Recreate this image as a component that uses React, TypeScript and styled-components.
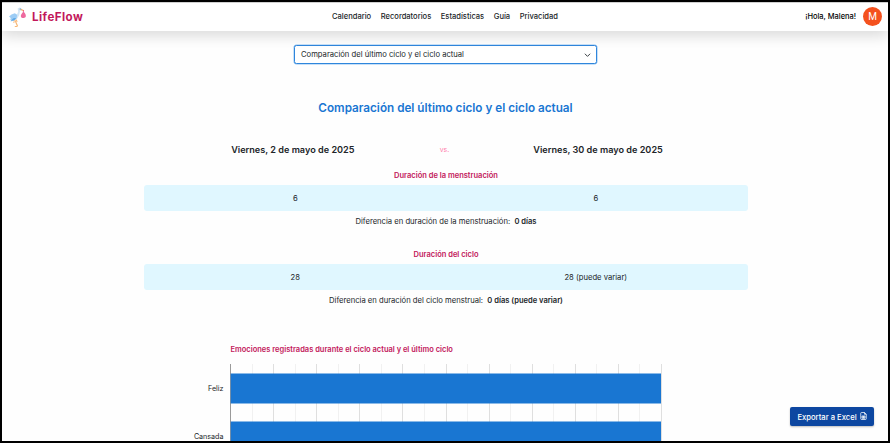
import React from 'react';
import styled, { createGlobalStyle } from 'styled-components';

const Global = createGlobalStyle`
  *, *::before, *::after { box-sizing: border-box; }
  body { margin: 0; background: #fff; }
`;

const Frame = styled.div`
  position: relative;
  width: 890px;
  height: 443px;
  overflow: hidden;
  border: 2px solid #000;
  background: #fefefe;
  color: #212529;
  font-family: Inter, 'Liberation Sans', sans-serif;
  font-size: 7.65px;
  line-height: 16px;
  white-space: nowrap;
`;

const Header = styled.header`
  position: relative;
  display: grid;
  grid-template-columns: 1fr auto 1fr;
  align-items: center;
  height: 29px;
  padding: 0 6px;
  background: #fff;
  border-top: 1px solid #d0d0d0;
  box-shadow: 0 5px 14px rgba(0, 0, 0, 0.14);
`;

const Brand = styled.a`
  display: flex;
  align-items: center;
  gap: 5px;
  color: #c2185b;
  font-size: 11.6px;
  font-weight: 700;
  letter-spacing: 0.45px;
`;

const Nav = styled.nav`
  display: flex;
  gap: 9.6px;
  font-size: 7.55px;
  font-weight: 500;
`;

const Account = styled.div`
  display: flex;
  align-items: center;
  justify-content: flex-end;
  gap: 7px;
  font-size: 7.46px;
  font-weight: 500;
  color: #000;
`;

const Avatar = styled.span`
  display: grid;
  place-items: center;
  width: 19px;
  height: 19px;
  margin-top: -2px;
  border-radius: 50%;
  background: #f4511e;
  color: #fff;
  font: 400 10px Roboto, sans-serif;
`;

const Main = styled.main`
  display: flex;
  flex-direction: column;
  width: 604px;
  margin: 14px 0 0 142px;
`;

const Select = styled.div`
  display: flex;
  align-items: center;
  justify-content: space-between;
  align-self: flex-start;
  width: 303px;
  height: 19px;
  margin-left: 150px;
  padding: 1px 5px 0 6px;
  border: 1px solid #2f86dc;
  border-radius: 2.5px;
  background: #fff;
  box-shadow: 0 0 0 0.5px #90c2f2;
`;

const Title = styled.h1`
  margin: 35px 1px 0 0;
  color: #1976d2;
  font-size: 11.71px;
  font-weight: 600;
  line-height: 18px;
  text-align: center;
`;

const Dates = styled.div`
  display: flex;
  align-items: center;
  justify-content: space-evenly;
  margin-top: 25px;
  padding-left: 2px;
  font-size: 9.13px;
  font-weight: 600;
`;

const Versus = styled.span`
  margin-right: -1px;
  color: #ff80ab;
  font-size: 6.9px;
  font-weight: 400;
`;

const Comparison = styled.section`
  margin-top: 9px;
  & + & { margin-top: 16px; }
`;

const Heading = styled.h2`
  margin: 0;
  color: #c2185b;
  font-size: 7.52px;
  font-weight: 600;
  line-height: 18px;
  text-align: center;
`;

const Values = styled.div`
  display: grid;
  grid-template-columns: 1fr 1fr;
  align-items: center;
  height: 26px;
  padding: 2px 2px 0 1px;
  border-radius: 3px;
  background: #e0f7ff;
  text-align: center;
`;

const Difference = styled.p`
  display: flex;
  justify-content: center;
  gap: 4.3px;
  margin: 3px 0 0;
`;

const Strong = styled.strong`
  font-size: 7.55px;
  font-weight: 600;
`;

const Chart = styled.section`
  display: grid;
  grid-template-columns: 79.5px 431px;
  column-gap: 7px;
  margin-top: 33px;
`;

const ChartTitle = styled.h2`
  grid-column: 2;
  margin: 0;
  color: #c2185b;
  font-size: 7.5px;
  font-weight: 600;
  line-height: 16px;
`;

const Categories = styled.div`
  display: grid;
  grid-auto-rows: 48px;
  align-items: center;
  padding-top: 7px;
  font-size: 7.15px;
  text-align: right;
`;

const Plot = styled.svg`
  display: block;
  margin: 6px 0 0 -0.5px;
`;

const ExportButton = styled.button`
  position: absolute;
  right: 14px;
  bottom: 15px;
  display: flex;
  align-items: center;
  justify-content: center;
  gap: 3px;
  width: 84px;
  height: 19px;
  padding: 1px 0 0;
  border: 0;
  border-radius: 2px;
  background: #0d47a1;
  color: #fff;
  font: 500 7.65px Inter, 'Liberation Sans', sans-serif;
  box-shadow: 0 1px 2px rgba(0, 0, 0, 0.25);

  svg { margin-top: -2px; }
`;

const Stork = () => (
  <svg width="19" height="21" viewBox="0 0 19 21" fill="none">
    <path d="M9.600 1.400 11.500.5l2 .8.300 1.300-1.800 1.600-.8 4-2.700 4.600-4 .6-1.500-2L8.500 9l1.700-4.400z" fill="#d3e6f5" />
    <path d="M1 9.500 3.500 7.500l3.300-1.300 2.400 1.600-.5 3.200-2.400 2.400-3.800 1 1-1.600-2-.2 1.500-1.400z" fill="#9dcdf5" />
    <path d="M2.500 13.800 5.800 11l2.500.2-2.200 2.200z" fill="#5fa9e6" />
    <path d="m13 1.900 3.200 1.300-.4.800-2.900-.7z" fill="#f4a24e" />
    <circle cx="12.200" cy="1.900" r=".5" fill="#37566f" />
    <path d="M15.400 3.200v2.600" stroke="#e94d87" strokeWidth=".8" />
    <path d="M15.400 4.800c1.900 1.400 2.700 3 2.400 4.700-.5 1.900-4.400 2-4.900.2-.4-1.700.8-3.400 2.500-4.900z" fill="#ee6a9f" />
    <path d="M6.600 13.300 8 15.500l1.600 3.800M8 12.800l1.200 2M6.400 15.400l-1-.5M6.800 19.500l2.600-.2" stroke="#f7b878" strokeWidth="1.200" />
  </svg>
);

const Chevron = () => (
  <svg width="7" height="7" viewBox="0 0 8 8" fill="none" stroke="#343a40" strokeWidth="1.100">
    <path d="m1 2 3 3 3-3" />
  </svg>
);

const FileIcon = () => (
  <svg width="7" height="8" viewBox="0 0 14 16" fill="none" stroke="#fff" strokeWidth="1.500">
    <path d="M9 1H3a1.500 1.500 0 0 0-1.500 1.500v11A1.500 1.500 0 0 0 3 15h8a1.500 1.500 0 0 0 1.500-1.500v-9zM9 1v3.500h3.500M4 8h6v4.500H4zM4 10.200h6M7 8v4.500" />
  </svg>
);

const links = ['Calendario', 'Recordatorios', 'Estadísticas', 'Guía', 'Privacidad'];
const comparisons = [
  { heading: 'Duración de la menstruación', values: ['6', '6'], label: 'Diferencia en duración de la menstruación:', result: '0 días' },
  { heading: 'Duración del ciclo', values: ['28', '28 (puede variar)'], label: 'Diferencia en duración del ciclo menstrual:', result: '0 días (puede variar)' },
];
const ticks = Array.from({ length: 21 }, (_, i) => i);
const tickColor = (i: number) => (i === 0 ? '#9a9a9a' : i % 2 ? '#f1f1f1' : '#dfdfdf');

export default function App() {
  return (
    <>
      <Global />
      <Frame>
        <Header>
          <Brand><Stork />LifeFlow</Brand>
          <Nav>{links.map((l) => <span key={l}>{l}</span>)}</Nav>
          <Account>¡Hola, Malena!<Avatar>M</Avatar></Account>
        </Header>
        <Main>
          <Select>Comparación del último ciclo y el ciclo actual<Chevron /></Select>
          <Title>Comparación del último ciclo y el ciclo actual</Title>
          <Dates>
            <span>Viernes, 2 de mayo de 2025</span>
            <Versus>vs.</Versus>
            <span>Viernes, 30 de mayo de 2025</span>
          </Dates>
          {comparisons.map((c) => (
            <Comparison key={c.heading}>
              <Heading>{c.heading}</Heading>
              <Values>{c.values.map((v, i) => <span key={i}>{v}</span>)}</Values>
              <Difference>{c.label}<Strong>{c.result}</Strong></Difference>
            </Comparison>
          ))}
          <Chart>
            <ChartTitle>Emociones registradas durante el ciclo actual y el último ciclo</ChartTitle>
            <Categories><span>Feliz</span><span>Cansada</span></Categories>
            <Plot width="432" height="96" viewBox="0 0 432 96">
              {ticks.map((i) => (
                <rect key={i} x={Math.round(i * 21.55)} y="0" width="1" height="96" fill={tickColor(i)} />
              ))}
              {[9.5, 57.5].map((y) => (
                <rect key={y} x="0.700" y={y} width="430.300" height="30" fill="#1976d2" />
              ))}
            </Plot>
          </Chart>
        </Main>
        <ExportButton>Exportar a Excel<FileIcon /></ExportButton>
      </Frame>
    </>
  );
}
